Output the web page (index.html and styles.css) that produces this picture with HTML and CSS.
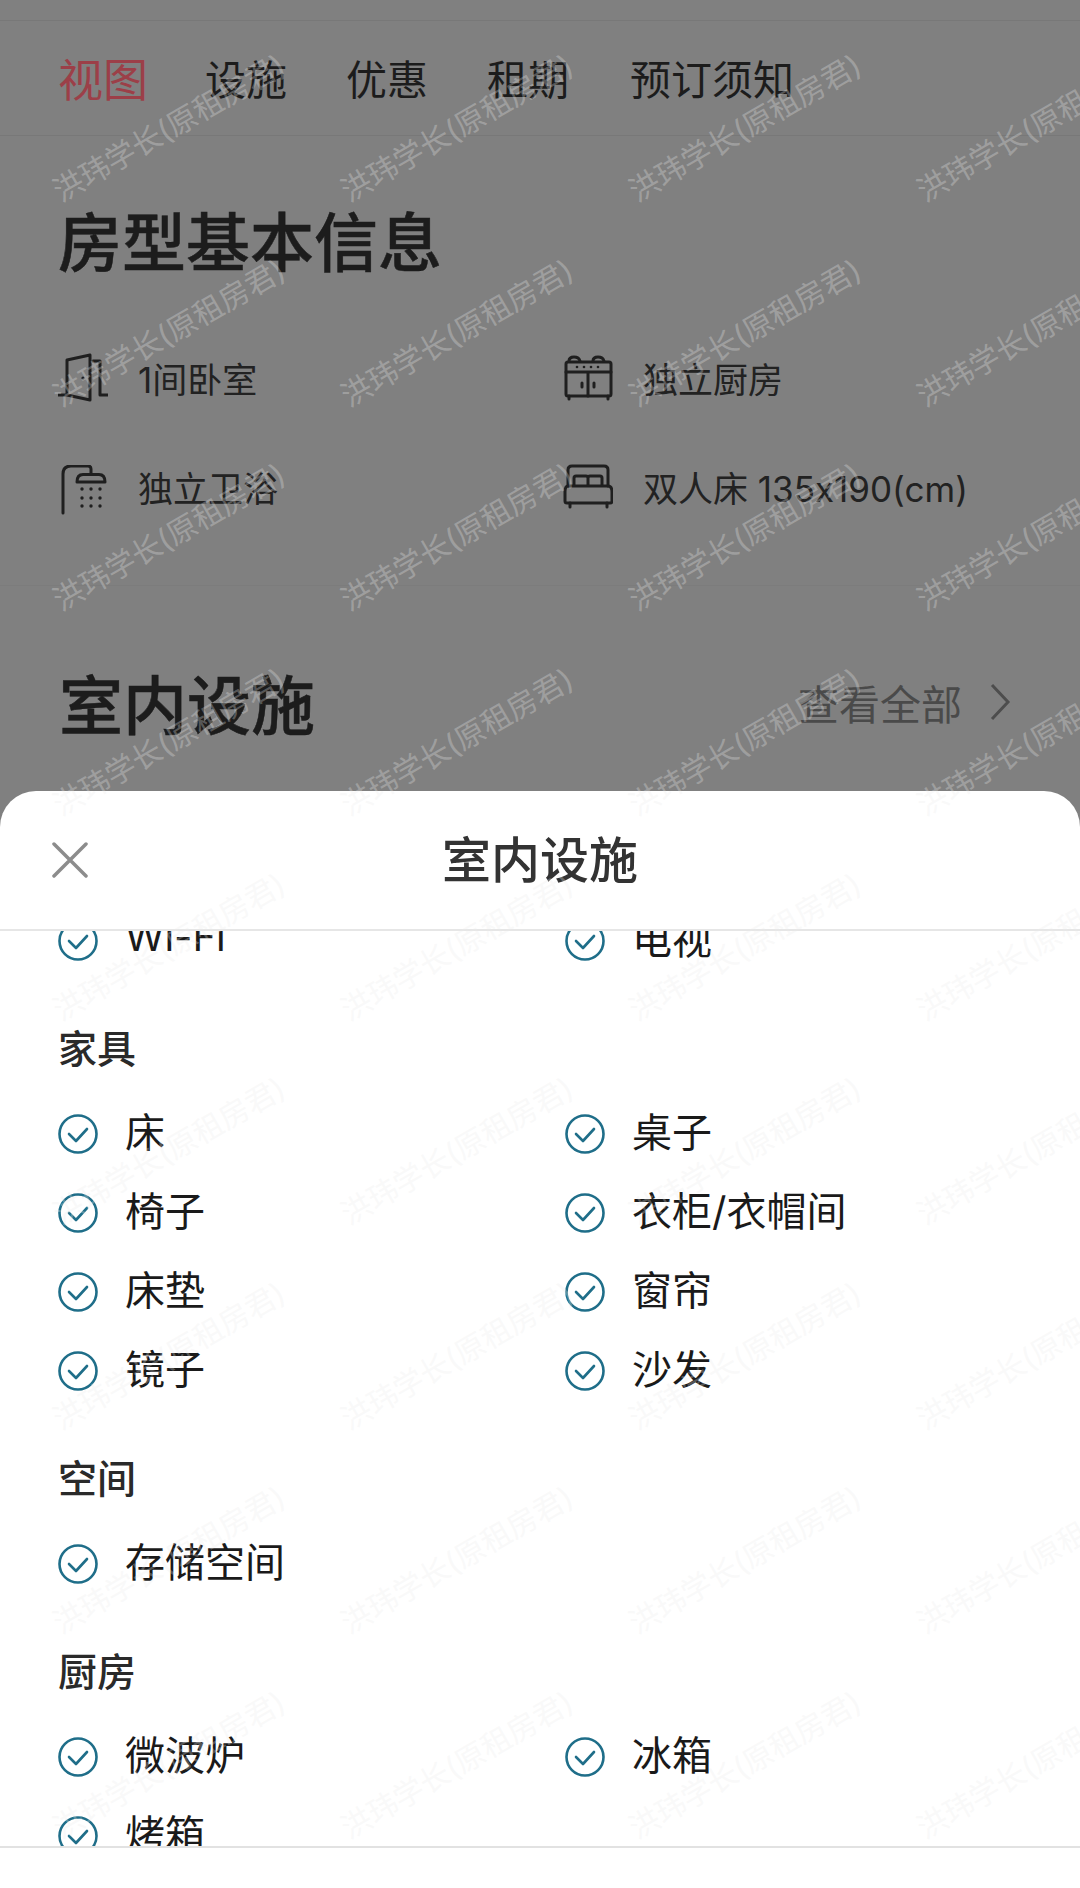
FILE: index.html
```html
<!DOCTYPE html>
<html lang="zh-CN">
<head>
    <meta charset="UTF-8">
    <meta name="viewport" content="width=device-width, initial-scale=1.0">
    <title>室内设施</title>
    <link rel="stylesheet" href="styles.css">
</head>
<body>
<div class="screen">

    <div class="topbar"></div>

    <nav class="tabs">
        <span class="tab active">视图</span>
        <span class="tab">设施</span>
        <span class="tab">优惠</span>
        <span class="tab">租期</span>
        <span class="tab">预订须知</span>
    </nav>

    <section class="basic">
        <h2 class="page-title">房型基本信息</h2>
        <div class="basic-grid">
            <div class="basic-item">
                <svg class="basic-icon" viewBox="0 0 50 50">
                    <path d="M9 42V7L32 2V47L9 42H0"/>
                    <path d="M35 8H42V42H50"/>
                    <circle class="solid" cx="25" cy="25" r="1.6"/>
                </svg>
                <span>1间卧室</span>
            </div>
            <div class="basic-item">
                <svg class="basic-icon" viewBox="0 0 50 50">
                    <rect x="3" y="9" width="45" height="34" rx="2"/>
                    <path d="M3 19H48M25 19V43M6 43V46M45 43V46"/>
                    <path d="M6 8Q6 4 11 4T17 8M30 8Q30 4 35 4T41 8"/>
                    <circle class="solid" cx="14" cy="14" r="1.3"/>
                    <circle class="solid" cx="21" cy="14" r="1.3"/>
                    <circle class="solid" cx="28" cy="14" r="1.3"/>
                    <circle class="solid" cx="35" cy="14" r="1.3"/>
                    <path d="M19 30V34M31 30V34"/>
                </svg>
                <span>独立厨房</span>
            </div>
            <div class="basic-item">
                <svg class="basic-icon shower" viewBox="0 0 50 50">
                    <path d="M5 48V9Q5 1 13 1H30Q33 1 33 4V9"/>
                    <path d="M19 17Q19 9.500 25 9.500H41Q47 9.500 47 17Z"/>
                    <circle class="solid" cx="24" cy="24" r="1.7"/>
                    <circle class="solid" cx="33" cy="24" r="1.7"/>
                    <circle class="solid" cx="42" cy="24" r="1.7"/>
                    <circle class="solid" cx="24" cy="33" r="1.7"/>
                    <circle class="solid" cx="33" cy="33" r="1.7"/>
                    <circle class="solid" cx="42" cy="33" r="1.7"/>
                    <circle class="solid" cx="24" cy="41" r="1.7"/>
                    <circle class="solid" cx="33" cy="41" r="1.7"/>
                    <circle class="solid" cx="42" cy="41" r="1.7"/>
                </svg>
                <span>独立卫浴</span>
            </div>
            <div class="basic-item">
                <svg class="basic-icon" viewBox="0 0 50 50">
                    <path d="M5 24V8Q5 4 9 4H41Q45 4 45 8V24"/>
                    <path d="M11 23V16Q11 14 13 14H23Q25 14 25 16V23M25 16Q25 14 27 14H37Q39 14 39 16V23"/>
                    <path d="M5 24H45Q49 24 49 30V39Q49 41 47 41H4Q2 41 2 39V30Q2 24 5 24Z"/>
                    <path d="M7 41V45M44 41V45"/>
                </svg>
                <span>双人床 135x190(cm)</span>
            </div>
        </div>
    </section>

    <section class="facilities">
        <h2 class="page-title">室内设施</h2>
        <div class="see-all">
            <span>查看全部</span>
            <svg class="chevron" viewBox="0 0 22 38"><path d="M3 2L19 19L3 36"/></svg>
        </div>
    </section>

    <div class="sheet">
        <header class="sheet-head">
            <svg class="close" viewBox="0 0 36 36"><path d="M2 2L34 34M34 2L2 34"/></svg>
            <h3 class="sheet-title">室内设施</h3>
        </header>

        <div class="sheet-body">
            <div class="sheet-scroll">
                <div class="fac-grid">
                    <div class="fac"><svg class="check" viewBox="0 0 40 40"><circle cx="20" cy="20" r="18.500"/><path d="M11 20L18 27L29 15"/></svg>Wi-Fi</div>
                    <div class="fac"><svg class="check" viewBox="0 0 40 40"><circle cx="20" cy="20" r="18.500"/><path d="M11 20L18 27L29 15"/></svg>电视</div>
                </div>

                <h4 class="fac-title">家具</h4>
                <div class="fac-grid">
                    <div class="fac"><svg class="check" viewBox="0 0 40 40"><circle cx="20" cy="20" r="18.500"/><path d="M11 20L18 27L29 15"/></svg>床</div>
                    <div class="fac"><svg class="check" viewBox="0 0 40 40"><circle cx="20" cy="20" r="18.500"/><path d="M11 20L18 27L29 15"/></svg>桌子</div>
                    <div class="fac"><svg class="check" viewBox="0 0 40 40"><circle cx="20" cy="20" r="18.500"/><path d="M11 20L18 27L29 15"/></svg>椅子</div>
                    <div class="fac"><svg class="check" viewBox="0 0 40 40"><circle cx="20" cy="20" r="18.500"/><path d="M11 20L18 27L29 15"/></svg>衣柜/衣帽间</div>
                    <div class="fac"><svg class="check" viewBox="0 0 40 40"><circle cx="20" cy="20" r="18.500"/><path d="M11 20L18 27L29 15"/></svg>床垫</div>
                    <div class="fac"><svg class="check" viewBox="0 0 40 40"><circle cx="20" cy="20" r="18.500"/><path d="M11 20L18 27L29 15"/></svg>窗帘</div>
                    <div class="fac"><svg class="check" viewBox="0 0 40 40"><circle cx="20" cy="20" r="18.500"/><path d="M11 20L18 27L29 15"/></svg>镜子</div>
                    <div class="fac"><svg class="check" viewBox="0 0 40 40"><circle cx="20" cy="20" r="18.500"/><path d="M11 20L18 27L29 15"/></svg>沙发</div>
                </div>

                <h4 class="fac-title">空间</h4>
                <div class="fac-grid">
                    <div class="fac"><svg class="check" viewBox="0 0 40 40"><circle cx="20" cy="20" r="18.500"/><path d="M11 20L18 27L29 15"/></svg>存储空间</div>
                </div>

                <h4 class="fac-title">厨房</h4>
                <div class="fac-grid">
                    <div class="fac"><svg class="check" viewBox="0 0 40 40"><circle cx="20" cy="20" r="18.500"/><path d="M11 20L18 27L29 15"/></svg>微波炉</div>
                    <div class="fac"><svg class="check" viewBox="0 0 40 40"><circle cx="20" cy="20" r="18.500"/><path d="M11 20L18 27L29 15"/></svg>冰箱</div>
                    <div class="fac"><svg class="check" viewBox="0 0 40 40"><circle cx="20" cy="20" r="18.500"/><path d="M11 20L18 27L29 15"/></svg>烤箱</div>
                </div>
            </div>
        </div>

        <div class="sheet-foot"></div>
    </div>

    <!-- watermark over everything -->
    <div class="watermarks">
        <span>洪玮学长(原租房君)</span><span>洪玮学长(原租房君)</span><span>洪玮学长(原租房君)</span><span>洪玮学长(原租房君)</span>
        <span>洪玮学长(原租房君)</span><span>洪玮学长(原租房君)</span><span>洪玮学长(原租房君)</span><span>洪玮学长(原租房君)</span>
        <span>洪玮学长(原租房君)</span><span>洪玮学长(原租房君)</span><span>洪玮学长(原租房君)</span><span>洪玮学长(原租房君)</span>
        <span>洪玮学长(原租房君)</span><span>洪玮学长(原租房君)</span><span>洪玮学长(原租房君)</span><span>洪玮学长(原租房君)</span>
        <span>洪玮学长(原租房君)</span><span>洪玮学长(原租房君)</span><span>洪玮学长(原租房君)</span><span>洪玮学长(原租房君)</span>
        <span>洪玮学长(原租房君)</span><span>洪玮学长(原租房君)</span><span>洪玮学长(原租房君)</span><span>洪玮学长(原租房君)</span>
        <span>洪玮学长(原租房君)</span><span>洪玮学长(原租房君)</span><span>洪玮学长(原租房君)</span><span>洪玮学长(原租房君)</span>
        <span>洪玮学长(原租房君)</span><span>洪玮学长(原租房君)</span><span>洪玮学长(原租房君)</span><span>洪玮学长(原租房君)</span>
        <span>洪玮学长(原租房君)</span><span>洪玮学长(原租房君)</span><span>洪玮学长(原租房君)</span><span>洪玮学长(原租房君)</span>
    </div>

</div>
</body>
</html>
```

FILE: styles.css
```css
* {
    box-sizing: border-box;
}
body {
    margin: 0;
    background-color: #808080;
    font-family: Inter, "Noto Sans CJK SC", sans-serif;
    color: #1c1c1c;
}
h2, h3, h4 {
    margin: 0;
}
.screen {
    position: relative;
    width: 1080px;
    height: 1888px;
    overflow: hidden;
}
.topbar {
    height: 21px;
    border-bottom: 1px solid #787878;
}
.tabs {
    display: flex;
    align-items: center;
    gap: 59px;
    height: 115px;
    padding-top: 4px;
    padding-left: 58px;
    border-bottom: 1px solid #787878;
}
.tab {
    font-size: 41px;
    line-height: 1;
}
.tab:last-child {
    margin-left: 2px;
}
.tab.active {
    font-size: 45px;
    color: #9c3f48;
    margin-right: -2px;
}
.basic {
    height: 450px;
    padding: 0 0 0 58px;
    border-bottom: 1px solid #7c7c7c;
}
.page-title {
    font-size: 64px;
    font-weight: 500;
    line-height: 80px;
    color: #1c1c1c;
    -webkit-text-stroke: 0.5px #1c1c1c;
}
.basic .page-title {
    padding-top: 67px;
    height: 145px;
}
.basic-grid {
    display: grid;
    grid-template-columns: 505px 1fr;
    grid-auto-rows: 109px;
    padding-top: 42px;
}
.basic-item {
    display: flex;
    align-items: center;
    gap: 30px;
    font-size: 35px;
    height: 109px;
    color: #222;
}
.basic-icon {
    width: 50px;
    height: 50px;
    flex: none;
    fill: none;
    stroke: #1f1f1f;
    stroke-width: 3;
    stroke-linecap: round;
    stroke-linejoin: round;
}
.basic-icon.shower {
    margin-top: 6px;
}
.basic-icon .solid {
    fill: #1f1f1f;
    stroke: none;
}
.facilities {
    display: flex;
    align-items: center;
    justify-content: space-between;
    padding: 80px 69px 0 59px;
}
.see-all {
    display: flex;
    align-items: center;
    gap: 27px;
    margin-bottom: 8px;
    font-size: 41px;
    color: #4a4a4a;
}
.chevron {
    width: 22px;
    height: 38px;
    fill: none;
    stroke: #4d4d4d;
    stroke-width: 3;
}
.sheet {
    position: absolute;
    left: 0;
    right: 0;
    top: 791px;
    bottom: 0;
    display: flex;
    flex-direction: column;
    background: white;
    border-radius: 36px 36px 0 0;
    color: #222;
}
.sheet-head {
    position: relative;
    display: flex;
    align-items: center;
    justify-content: center;
    flex: none;
    height: 140px;
    border-bottom: 2px solid #e6e6e6;
}
.close {
    position: absolute;
    left: 52px;
    top: 51px;
    width: 36px;
    height: 36px;
    fill: none;
    stroke: #8c8c8c;
    stroke-width: 3.500;
    stroke-linecap: round;
}
.sheet-title {
    font-size: 49px;
    font-weight: 500;
    line-height: 1;
    color: #333;
}
.sheet-body {
    flex: 1;
    overflow: hidden;
}
.sheet-scroll {
    margin-top: -34px;
    padding-left: 58px;
}
.fac-grid {
    display: grid;
    grid-template-columns: 507px 1fr;
    grid-auto-rows: 79px;
}
.fac {
    display: flex;
    align-items: center;
    gap: 27px;
    font-size: 40px;
    color: #1a1a1a;
}
.check {
    width: 40px;
    height: 40px;
    margin-top: 9px;
    flex: none;
    fill: none;
    stroke: #1f6e89;
    stroke-width: 2.600;
    stroke-linecap: round;
    stroke-linejoin: round;
}
.fac-title {
    margin: 43px 0 11px;
    font-size: 39px;
    font-weight: 500;
    line-height: 60px;
    color: #2a2a2a;
}
.sheet-foot {
    flex: none;
    height: 42px;
    border-top: 2px solid #e2e2e2;
    background: white;
}
.watermarks {
    position: absolute;
    inset: 0;
    display: grid;
    grid-template-columns: repeat(4, 288px);
    grid-auto-rows: 204.600px;
    place-items: center;
    padding: 24px 0 0 24px;
    pointer-events: none;
}
.watermarks span {
    font-size: 30px;
    white-space: nowrap;
    color: rgba(235, 235, 235, 0.3);
    transform: rotate(-30deg);
}
```
